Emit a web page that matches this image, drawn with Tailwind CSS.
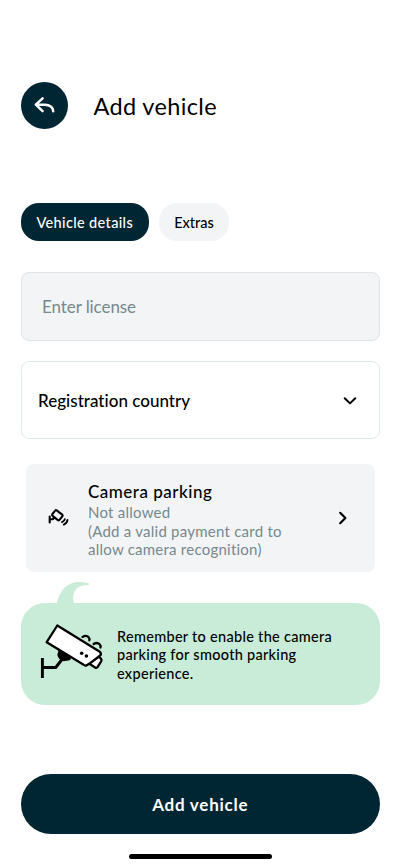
<!DOCTYPE html>
<html lang="en">
<head>
<meta charset="utf-8">
<meta name="viewport" content="width=device-width, initial-scale=1">
<title>Add vehicle</title>
<script src="https://cdn.jsdelivr.net/npm/@tailwindcss/browser@4"></script>
</head>
<body class="bg-white font-['Lato',sans-serif] text-black">
<main class="flex h-[867px] w-[400px] flex-col overflow-hidden pt-[82px] pr-5 pl-[20.5px]">
  <header class="flex h-[47px] shrink-0 items-center gap-[26px]">
    <button aria-label="Back" class="flex size-[47px] items-center justify-center rounded-full bg-[#002634]">
      <svg class="size-6" viewBox="0 0 24 24" fill="none" stroke="white" stroke-width="2.500" stroke-linecap="round" stroke-linejoin="round"><path d="M10.600 4.300 3.800 10.700l6.800 6.400M4.200 10.700h8.800c4.600 0 8.200 2.700 8.200 6.600"/></svg>
    </button>
    <h1 class="mt-px text-[23.500px] leading-[30px] tracking-[0.350px] whitespace-nowrap">Add vehicle</h1>
  </header>
  <nav class="mt-[74px] flex h-[38px] shrink-0 gap-[10px] text-[14.500px] font-medium">
    <button class="flex w-[128.500px] items-center justify-center rounded-[18px] bg-[#002634] pt-px tracking-[0.350px] text-white">Vehicle details</button>
    <button class="flex w-[70px] items-center justify-center rounded-[18px] bg-[#f3f4f6] pt-px">Extras</button>
  </nav>
  <div class="mt-[31px] flex h-[69px] shrink-0 items-center rounded-[8px] border border-[#dde5e9] bg-[#f3f4f6] px-[20.500px] text-[17px] tracking-[-0.080px] text-[#75898f]">Enter license</div>
  <div class="mt-[20px] flex h-[78px] shrink-0 items-center justify-between rounded-[8px] border border-[#dfe7ea] pr-[22px] pl-[16.500px] text-[17px] font-medium tracking-[0.020px]">
    <span class="pt-[2px]">Registration country</span>
    <svg class="mt-px h-[10px] w-[14px]" viewBox="0 0 14 10" fill="none" stroke="black" stroke-width="2" stroke-linecap="round" stroke-linejoin="round"><path d="m1.700 2.200 5.300 5.200 5.300-5.200"/></svg>
  </div>
  <section class="mt-[25px] mr-[5px] ml-[5px] flex h-[108px] shrink-0 items-center rounded-[8px] bg-[#f3f4f6] pr-[27px] pl-[22px]">
    <svg class="h-[20px] w-[22px] shrink-0" viewBox="0 0 22 20" fill="none" stroke="black" stroke-width="2.100" stroke-linecap="round" stroke-linejoin="round"><path d="M7.200 2.600 4.300 6.200q-.6.900.3 1.600l5.300 4.300q.9.600 1.600-.2l3-3.700q.6-.9-.3-1.600L8.700 2.300q-.9-.6-1.500.3ZM1.700 8.500v6M2 11.200h3l1.300-1.900"/><path stroke-width="1.800" d="M16.800 11.200q-.3 2-2.800 2.900M19.500 12q-.5 3.200-3.700 4.600"/></svg>
    <div class="ml-[18.500px] grow pt-[3px] text-[15px] leading-[18.400px] tracking-[0.240px] whitespace-nowrap text-[#75898f]">
      <h2 class="mb-px text-[17px] leading-[21.500px] font-medium tracking-[0.500px] text-black">Camera parking</h2>
      <p>Not allowed<br>(Add a valid payment card to<br>allow camera recognition)</p>
    </div>
    <svg class="h-[14px] w-[10px] shrink-0" viewBox="0 0 10 14" fill="none" stroke="black" stroke-width="2.200" stroke-linecap="round" stroke-linejoin="round"><path d="m2.200 1.800 5.200 5.200-5.200 5.200"/></svg>
  </section>
  <aside class="relative mt-[31px] flex h-[102px] shrink-0 items-center rounded-[24px] bg-[#c8ecd7] pl-[19.500px]">
    <svg class="absolute -top-[22px] left-[34.500px] h-[24px] w-[36px]" viewBox="0 0 36 24" fill="#c8ecd7"><path d="M1.500 24C4.500 7 15 .5 25 1q6 .2 9 1.600.5 1.600-1.500 1.700C23 3.600 15 10 19.500 24Z"/></svg>
    <svg class="-mt-[5px] h-[60px] w-[64px] shrink-0" viewBox="0 0 64 60" fill="none" stroke="black" stroke-width="2.300" stroke-linecap="round" stroke-linejoin="round">
      <path stroke-width="2.900" stroke-linecap="butt" d="M2.400 36v20M2.400 45.500h13.300l7-9"/>
      <path fill="black" d="m20 27-1.500 6q1 4 5 5l6-1v-4Z"/>
      <path fill="white" d="m49 41.500 6.500 4.300q1.400.3 2.200-.9l3.600-5.700q.5-1.200-.2-2.300L59 34.500Z"/>
      <path fill="white" d="M17.300 3.500 59.800 29.800q1.800 1.500.7 3.400l-11 8.400-3.200 2q-1.200.2-2.200-.5L6.700 20.200Z"/>
      <path d="M42.500 14.900q4-2.200 6.100.3 1.300 1.500.7 3.200M53.600 22q3.700-2.200 6 .3 1.400 1.500.8 3.200"/>
      <g fill="black" stroke="none"><circle cx="41.700" cy="31.200" r="1.800"/><circle cx="46.400" cy="34" r="1.800"/></g>
    </svg>
    <p class="ml-[13px] pt-[3px] text-[14.500px] leading-[18.500px] font-medium tracking-[0.290px] whitespace-nowrap">Remember to enable the camera<br>parking for smooth parking<br>experience.</p>
  </aside>
  <button class="mt-[69px] flex h-[60px] shrink-0 items-center justify-center rounded-full bg-[#002634] pt-px text-[17px] font-bold tracking-[0.750px] text-white">Add vehicle</button>
  <div class="mt-[20px] h-[5px] w-[143px] shrink-0 self-center rounded-full bg-black"></div>
</main>
</body>
</html>
